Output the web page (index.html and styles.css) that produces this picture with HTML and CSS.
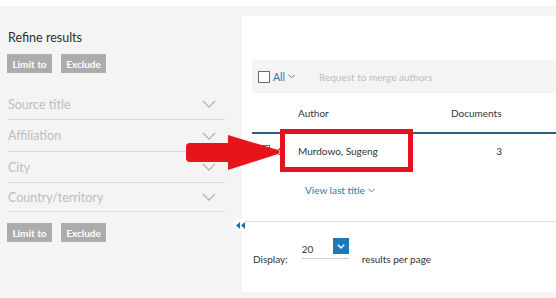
FILE: index.html
```html
<!DOCTYPE html>
<html>
<head>
<meta charset="utf-8">
<link rel="stylesheet" href="styles.css">
</head>
<body>
<div class="page">
  <aside class="sidebar">
    <h2 class="refine-title">Refine results</h2>
    <div class="btns">
      <span class="gbtn">Limit to</span>
      <span class="gbtn">Exclude</span>
    </div>
    <ul class="facets">
      <li class="facet"><span>Source title</span><svg class="chev" viewBox="0 0 14 8"><path d="M1 1 L7 7 L13 1" fill="none" stroke="#b5b5b5" stroke-width="1.3"/></svg></li>
      <li class="facet"><span>Affiliation</span><svg class="chev" viewBox="0 0 14 8"><path d="M1 1 L7 7 L13 1" fill="none" stroke="#b5b5b5" stroke-width="1.3"/></svg></li>
      <li class="facet"><span>City</span><svg class="chev" viewBox="0 0 14 8"><path d="M1 1 L7 7 L13 1" fill="none" stroke="#b5b5b5" stroke-width="1.3"/></svg></li>
      <li class="facet"><span>Country/territory</span><svg class="chev" viewBox="0 0 14 8"><path d="M1 1 L7 7 L13 1" fill="none" stroke="#b5b5b5" stroke-width="1.3"/></svg></li>
    </ul>
    <div class="btns btns2">
      <span class="gbtn">Limit to</span>
      <span class="gbtn">Exclude</span>
    </div>
  </aside>
  <main class="main">
    <div class="collapse-tab"><svg viewBox="0 0 9 7" class="dbl"><path d="M4 0 L0 3.5 L4 7 Z M9 0 L5 3.5 L9 7 Z" fill="#1d6fa5"/></svg></div>
    <div class="toolbar">
      <span class="cbox"></span>
      <span class="all">All</span>
      <svg class="all-chev" viewBox="0 0 8 5"><path d="M0.5 0.5 L4 4 L7.5 0.5" fill="none" stroke="#2a74a8" stroke-width="1"/></svg>
      <span class="merge">Request to merge authors</span>
    </div>
    <div class="thead">
      <span class="col-check"></span>
      <span class="col-author">Author</span>
      <span class="col-docs">Documents</span>
    </div>
    <div class="trow">
      <span class="col-check"><span class="cbox"></span><span class="num">1</span></span>
      <span class="col-author">Murdowo, Sugeng</span>
      <span class="col-docs num-right">3</span>
    </div>
    <div class="last-title">View last title <svg class="all-chev" viewBox="0 0 8 5"><path d="M0.5 0.5 L4 4 L7.5 0.5" fill="none" stroke="#2b7ba3" stroke-width="1"/></svg></div>
    <div class="display">
      <span class="disp-text">Display:</span>
      <span class="select"><span class="sel-val">20</span><span class="sel-btn"><svg viewBox="0 0 8 5"><path d="M0.8 0.8 L4 4 L7.2 0.8" fill="none" stroke="#fff" stroke-width="1.4"/></svg></span></span>
      <span class="disp-text">results per page</span>
    </div>
  </main>
  <div class="highlight-box"></div>
  <svg class="red-arrow" viewBox="0 0 100 40" width="100" height="40">
    <path d="M4 8 L42 8 L42 0 L92 15 Q95 17 92 19 L42 35 L42 27 L4 27 Q0 27 0 23 L0 12 Q0 8 4 8 Z" fill="#e8141c"/>
  </svg>
</div>
</body>
</html>
```
FILE: styles.css
```css
* { box-sizing: border-box; }
html, body { margin: 0; padding: 0; background: #fff; }
body {
  font-family: Lato, "Open Sans", sans-serif;
  color: #333;
  width: 556px;
  height: 298px;
  overflow: hidden;
}
.page {
  position: relative;
  margin-top: 6px;
  height: 292px;
  background: #f4f4f4;
  display: flex;
}
.sidebar {
  width: 242px;
  flex: none;
  padding: 0 17px 0 8px;
}
.refine-title {
  margin: 24px 0 0;
  font-size: 12.5px;
  font-weight: 400;
  line-height: 16px;
  color: #2f2f2f;
}
.btns {
  display: flex;
  gap: 9px;
  margin-top: 8px;
  margin-left: -1px;
}
.gbtn {
  width: 45px;
  height: 19px;
  background: #acacac;
  color: #fff;
  font-size: 10px;
  font-weight: 700;
  display: flex;
  align-items: center;
  justify-content: center;
}
.facets {
  list-style: none;
  margin: 16px 0 0;
  padding: 0;
}
.facet {
  height: 31px;
  border-bottom: 1px solid #dcdcdc;
  display: flex;
  align-items: center;
  justify-content: space-between;
  font-size: 12.5px;
  color: #bdbdbd;
  padding-right: 9px;
}
.facet:nth-child(2) { height: 32px; }
.facet:nth-child(4) { height: 29px; }
.chev { width: 14px; height: 8px; }
.btns2 { margin-top: 11px; }

.main {
  position: relative;
  flex: 1;
  margin-top: 10px;
  height: 276px;
  background: #fff;
  padding-left: 10px;
  font-size: 10px;
}
.collapse-tab {
  position: absolute;
  left: -9px;
  top: 203px;
  width: 12px;
  height: 12px;
  background: #fff;
  border-radius: 6px 0 0 6px;
  display: flex;
  align-items: center;
  justify-content: center;
}
.dbl { width: 9px; height: 7px; margin-left: 2px; }
.toolbar {
  margin-top: 44px;
  height: 33px;
  background: #f4f4f4;
  display: flex;
  align-items: center;
  padding-left: 6px;
}
.cbox {
  display: inline-block;
  width: 12px;
  height: 12px;
  border: 1px solid #6b6b6b;
  background: #fff;
}
.all { color: #2a74a8; margin-left: 3px; font-size: 10.5px; }
.all-chev { width: 7px; height: 5px; margin-left: 3px; }
.merge { color: #bdbdbd; margin-left: 24px; }
.thead, .trow {
  display: flex;
  align-items: center;
}
.thead {
  height: 41px;
  border-bottom: 2px solid #27617c;
  color: #333;
}
.col-check { width: 46px; padding-left: 6px; display: flex; align-items: center; }
.col-author { width: 153px; }
.col-docs { width: 51px; }
.trow { height: 34px; color: #333; }
.num { margin-left: 7px; }
.num-right { text-align: right; }
.last-title {
  color: #2b7ba3;
  padding-left: 53px;
  height: 20px;
  margin-top: 12px;
  display: flex;
  align-items: center;
}
.display {
  margin-top: 21px;
  margin-left: -10px;
  border-top: 1px solid #dcdcdc;
  padding: 13px 0 0 11px;
  display: flex;
  align-items: flex-start;
}
.disp-text { margin-top: 18px; line-height: 13px; }
.select {
  position: relative;
  width: 47px;
  height: 24px;
  margin-left: 14px;
  margin-right: 13px;
  border-bottom: 1px solid #ccc;
}
.sel-val { position: absolute; left: 0; top: 8px; line-height: 13px; }
.sel-btn {
  position: absolute;
  right: 0;
  top: 3px;
  width: 16px;
  height: 16px;
  background: #1f78b8;
  display: flex;
  align-items: center;
  justify-content: center;
}
.sel-btn svg { width: 8px; height: 5px; }

.highlight-box {
  position: absolute;
  left: 280px;
  top: 123px;
  width: 133px;
  height: 43px;
  border: 5px solid #e3141d;
}
.red-arrow {
  position: absolute;
  left: 186px;
  top: 129px;
}
```
